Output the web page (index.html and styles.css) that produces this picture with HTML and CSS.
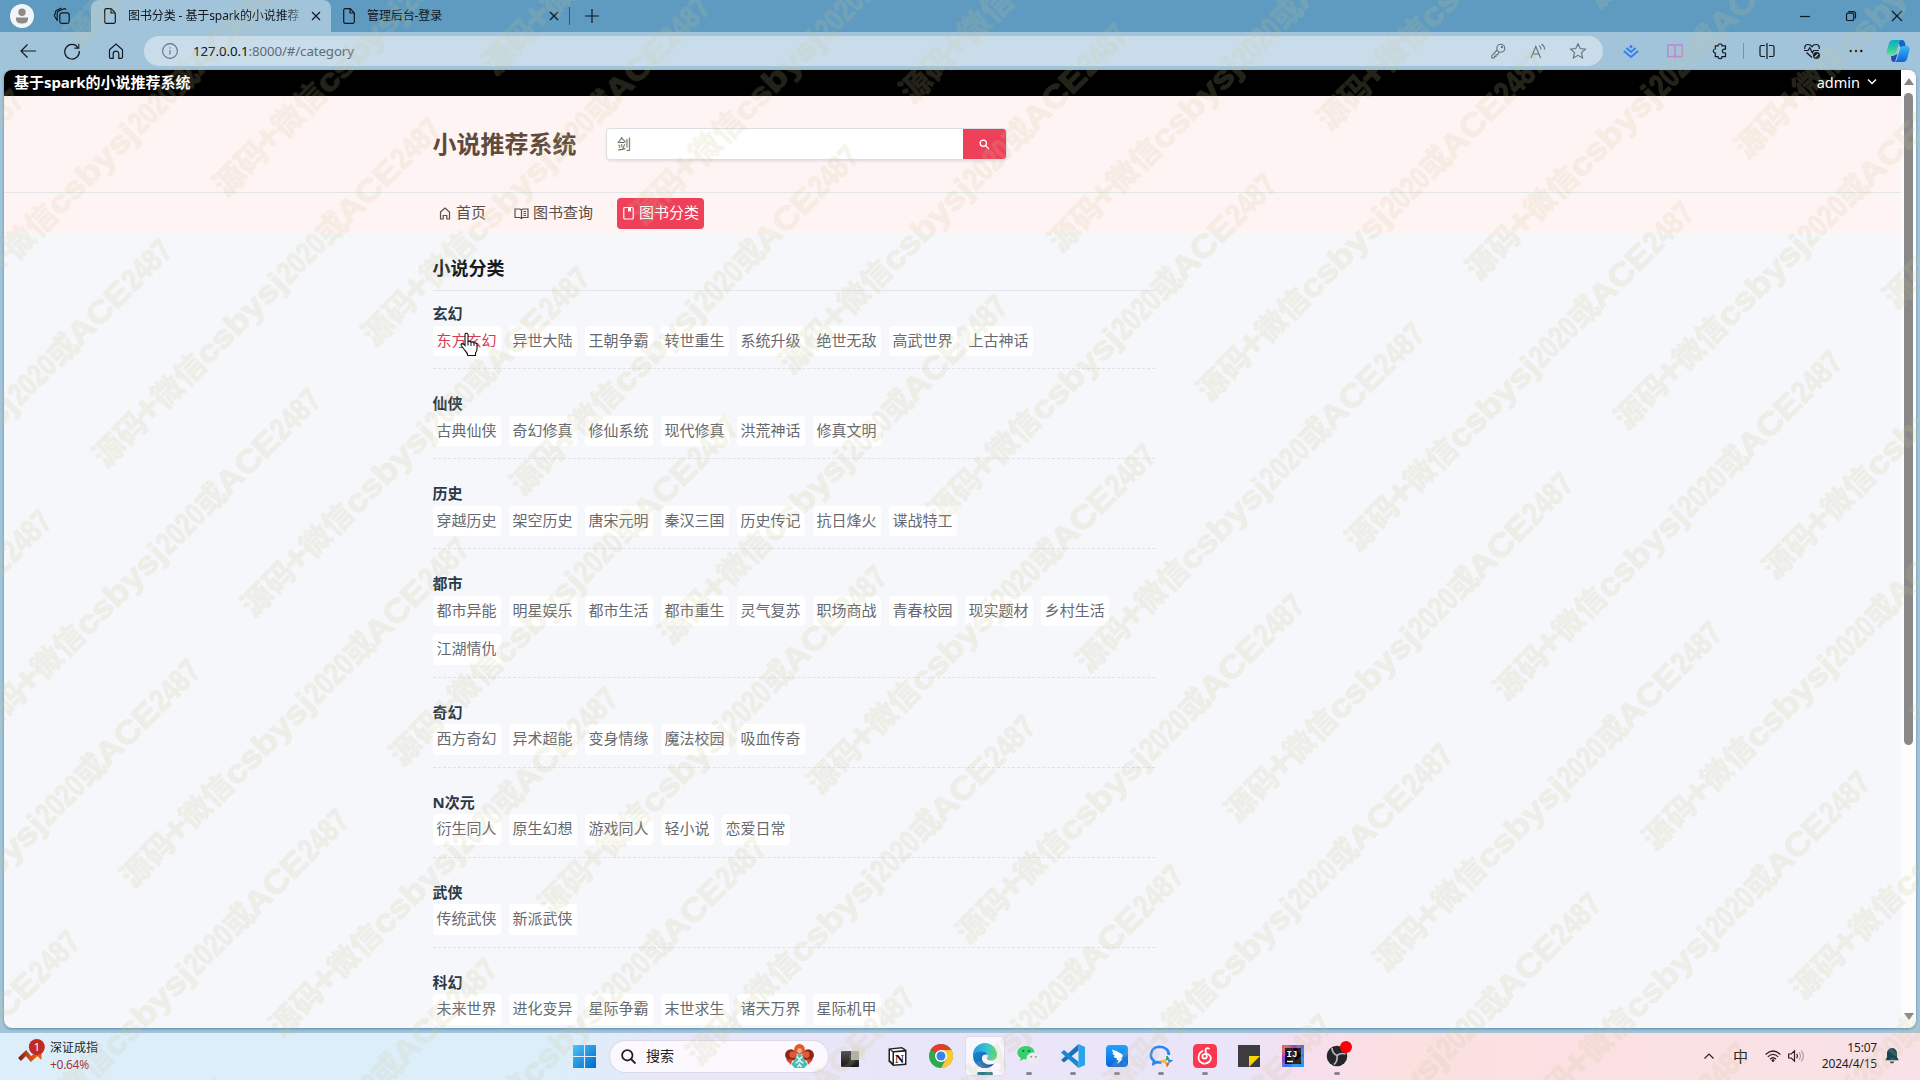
FILE: index.html
```html
<!DOCTYPE html>
<html lang="zh-CN">
<head>
<meta charset="utf-8">
<title>图书分类 - 基于spark的小说推荐系统</title>
<link rel="stylesheet" href="styles.css">
</head>
<body>
<div class="screen">
  <div class="tabbar">
    <svg class="avatar" viewBox="0 0 24 24"><circle cx="12" cy="12" r="12" fill="#f4f5f6"/><circle cx="12" cy="8.2" r="3.7" fill="#8b8b8b"/><path d="M6 13.5h12v1.5q0 4.5-6 4.5t-6-4.5z" fill="#8b8b8b"/></svg>
    <svg class="spaces ico" viewBox="0 0 18 18"><rect x="6.800" y="5.800" width="9.400" height="10.600" rx="2.200"/><path d="M4.200 14V6.200q0-1.600 1.500-2.300L11 1.800q1.500-.4 2 1M4.200 13.500 1.600 9.300q-.7-1.500.6-2.300l.2-1.500Q2.400 4 3.700 3.300L8.500 1"/></svg>
    <div class="tab active">
      <svg class="file ico" viewBox="0 0 12 16"><path d="M2 .7h5.200L11.300 5v8.800a1.500 1.500 0 0 1-1.500 1.500H2A1.500 1.500 0 0 1 .7 13.800V2.200A1.500 1.500 0 0 1 2 .7zM7 .9V5h4"/></svg>
      <span class="tab-title fade">图书分类 - 基于spark的小说推荐</span>
      <svg class="close ico" viewBox="0 0 10 10"><path d="M1 1l8 8M9 1L1 9"/></svg>
    </div>
    <div class="tab">
      <svg class="file ico" viewBox="0 0 12 16"><path d="M2 .7h5.200L11.300 5v8.800a1.500 1.500 0 0 1-1.500 1.500H2A1.500 1.500 0 0 1 .7 13.800V2.200A1.500 1.500 0 0 1 2 .7zM7 .9V5h4"/></svg>
      <span class="tab-title">管理后台-登录</span>
      <svg class="close ico" viewBox="0 0 10 10"><path d="M1 1l8 8M9 1L1 9"/></svg>
    </div>
    <i class="tab-sep"></i>
    <svg class="plus ico" viewBox="0 0 14 14"><path d="M7 0v14M0 7h14"/></svg>
    <div class="win-controls">
      <svg class="ico" viewBox="0 0 10 10"><path d="M0 5.500h10"/></svg>
      <svg class="ico" viewBox="0 0 10 10"><rect x=".5" y="2.200" width="7.200" height="7.300" rx="1.300"/><path d="M2.300.6h5.200a2 2 0 0 1 2 2v5"/></svg>
      <svg class="ico" viewBox="0 0 10 10"><path d="M0 0l10 10M10 0L0 10"/></svg>
    </div>
  </div>

  <div class="toolbar">
    <div class="nav-buttons">
      <svg class="ico" viewBox="0 0 16 16"><path d="M16 8H1M7.500 1.500 1 8l6.500 6.500"/></svg>
      <svg class="ico" viewBox="0 0 16 16"><path d="M14 4.500A7.300 7.300 0 1 0 15.300 8M14.800.8v4.400h-4.400"/></svg>
      <svg class="ico" viewBox="0 0 16 16"><path d="M1.500 6.700 8 1l6.500 5.700v7.300a1.300 1.300 0 0 1-1.300 1.300h-2.400V11a2.800 2.800 0 0 0-5.600 0v4.300H2.800a1.300 1.300 0 0 1-1.300-1.300z"/></svg>
    </div>
    <div class="address">
      <svg class="info" viewBox="0 0 16 16"><circle cx="8" cy="8" r="7.400"/><path d="M8 7v4.500M8 4.200v1.300"/></svg>
      <span class="url"><b>127.0.0.1</b>:8000/#/category</span>
      <div class="address-tools">
        <svg viewBox="0 0 16 16"><circle cx="10.800" cy="5.200" r="4"/><circle cx="12" cy="4" r=".6"/><path d="M7.200 7 1.800 12.600V15h2.600v-1.600H6v-1.700h1.800L9 8.900"/></svg>
        <svg viewBox="0 0 16 16"><path d="M1 15 5.800 3.500 10.600 15M2.600 11h6.400M9.300 2.800q1.700 1.200 1.700 3.600M11.600 1q3 2 3 5.500"/></svg>
        <svg viewBox="0 0 16 16"><path d="M8 .8l2.200 4.800 5.200.6-3.900 3.500 1.100 5.200L8 12.300l-4.600 2.600 1.100-5.200L.6 6.200l5.200-.6z"/></svg>
      </div>
    </div>
    <div class="extensions">
      <svg viewBox="0 0 16 16"><path d="M8 1.800l1.900 1.900L8 5.600 6.100 3.700z" fill="#2f7ff0"/><path d="M3.300 5 8 9l4.700-4M.8 8 8 14l7.200-6" fill="none" stroke="#2f7ff0" stroke-width="1.900"/></svg>
      <svg viewBox="0 0 16 16"><path d="M8 3v11M.8 2h5.600Q8 2 8 3.500 8 2 9.600 2h5.600v11.500H9.600L8 14.500l-1.600-1H.8z" fill="none" stroke="#bd86ce" stroke-width="1.500"/></svg>
      <svg class="ico" viewBox="0 0 16 16"><path d="M3.300 2.800h2.800a2 2 0 0 1 4 0h3.400v3.400h-1.200a1.900 1.900 0 0 0 0 3.800h1.200v3.700H10a2 2 0 0 1-4 0H3.300V10a2 2 0 0 1 0-4z"/></svg>
      <i class="tool-sep"></i>
      <svg class="ico" viewBox="0 0 16 16"><path d="M8 0v16M6 2.500H2.500A1.500 1.500 0 0 0 1 4v8a1.500 1.500 0 0 0 1.500 1.500H6M10 2.500h3.500A1.500 1.500 0 0 1 15 4v8a1.500 1.500 0 0 1-1.500 1.500H10"/></svg>
      <svg class="ico" viewBox="0 0 16 16"><path d="M.8 6Q.3 1.500 4 1.500q2.500 0 4 2.200 1.500-2.200 4-2.200 3.700 0 3.300 4.500M0 7.500h4l1.800-2.800 2.500 5 1.500-2.200h5M2.500 9.500 8 14.500"/><circle cx="12.500" cy="12.500" r="3.500" fill="#101820" stroke="none"/><path d="M10.800 14l3.300-3" stroke="#a2c4da"/></svg>
      <svg viewBox="0 0 16 16"><path d="M2.700 8h.01M8 8h.01M13.300 8h.01" stroke="#111" stroke-width="2.400" stroke-linecap="round"/></svg>
    </div>
    <svg class="copilot" viewBox="0 0 24 24"><defs><linearGradient id="cpA" x2="0" y2="1"><stop stop-color="#11a9c4"/><stop offset=".6" stop-color="#2fce9c"/><stop offset="1" stop-color="#7bdca0"/></linearGradient><linearGradient id="cpB" x2="0" y2="1"><stop stop-color="#3cb5f5"/><stop offset="1" stop-color="#0b66d8"/></linearGradient></defs><path d="M12 1h4q2 0 2.700 2l1.300 5h-6z" fill="#1763c9"/><path d="M5 16h4q2 0 2.700-2l-2 7q-.7 2-2 2-2 0-2.500-3z" fill="#2447c0"/><path d="M7 1h9q-2 0-2.700 2L9.500 15q-.7 2-2.500 2H3q-3 0-2.500-4L3 4q1-3 4-3z" fill="url(#cpA)"/><path d="M17 23H8q2 0 2.700-2L14.500 9q.7-2 2.500-2h4q3 0 2.500 4L21 20q-1 3-4 3z" fill="url(#cpB)"/></svg>
  </div>

  <div class="viewport">
    <div class="page">
      <div class="topline"><strong>基于<span>spark</span>的小说推荐系统</strong><span class="user">admin<svg viewBox="0 0 10 8"><path d="M1 1.500l4 4 4-4"/></svg></span></div>
      <header class="header">
        <h1>小说推荐系统</h1>
        <div class="search"><span class="field">剑</span><span class="go"><svg viewBox="0 0 12 12"><circle cx="4.700" cy="4.700" r="3.400"/><path d="M7.200 7.200l3.800 3.800"/></svg></span></div>
      </header>
      <nav class="nav">
        <a><svg viewBox="0 0 12 14"><path d="M1.500 6 6 2l4.500 4v7H7.800V9.500H4.200V13H1.500z"/></svg>首页</a>
        <a class="wide"><svg viewBox="0 0 15 14"><path d="M7.500 4v8.500M1 3h5l1.500 1L9 3h5v8.500H9l-1.500 1-1.500-1H1zM9.500 5.500H12M9.500 7.500H12M9.500 9.500H12"/></svg>图书查询</a>
        <a class="current"><svg viewBox="0 0 11 14"><rect x=".8" y="1.500" width="9.400" height="11.500" rx="1"/><path d="M5 1.500v4.500l1.500-1 1.500 1V1.500z" fill="#fff" stroke="none"/></svg>图书分类</a>
      </nav>
      <main class="content">
        <h2>小说分类</h2>
        <section><h3>玄幻</h3><div class="tags"><a class="hover">东方玄幻</a><a>异世大陆</a><a>王朝争霸</a><a>转世重生</a><a>系统升级</a><a>绝世无敌</a><a>高武世界</a><a>上古神话</a></div></section>
        <section><h3>仙侠</h3><div class="tags"><a>古典仙侠</a><a>奇幻修真</a><a>修仙系统</a><a>现代修真</a><a>洪荒神话</a><a>修真文明</a></div></section>
        <section><h3>历史</h3><div class="tags"><a>穿越历史</a><a>架空历史</a><a>唐宋元明</a><a>秦汉三国</a><a>历史传记</a><a>抗日烽火</a><a>谍战特工</a></div></section>
        <section><h3>都市</h3><div class="tags"><a>都市异能</a><a>明星娱乐</a><a>都市生活</a><a>都市重生</a><a>灵气复苏</a><a>职场商战</a><a>青春校园</a><a>现实题材</a><a>乡村生活</a><a>江湖情仇</a></div></section>
        <section><h3>奇幻</h3><div class="tags"><a>西方奇幻</a><a>异术超能</a><a>变身情缘</a><a>魔法校园</a><a>吸血传奇</a></div></section>
        <section><h3>N次元</h3><div class="tags"><a>衍生同人</a><a>原生幻想</a><a>游戏同人</a><a>轻小说</a><a>恋爱日常</a></div></section>
        <section><h3>武侠</h3><div class="tags"><a>传统武侠</a><a>新派武侠</a></div></section>
        <section><h3>科幻</h3><div class="tags"><a>未来世界</a><a>进化变异</a><a>星际争霸</a><a>末世求生</a><a>诸天万界</a><a>星际机甲</a></div></section>
      </main>
    </div>
    <div class="scrollbar"><i class="arrow up"></i><i class="thumb"></i><i class="arrow down"></i></div>
  </div>

  <div class="taskbar">
    <div class="stock">
      <svg viewBox="0 0 27 24"><defs><linearGradient id="st"><stop stop-color="#7a1f1f"/><stop offset=".45" stop-color="#c84a1a"/><stop offset="1" stop-color="#f0640a"/></linearGradient></defs><path d="M1.500 20.500 8 14l5 6 9-8" fill="none" stroke="url(#st)" stroke-width="4.200"/><path d="M14 12h9.500v9z" fill="#e8590c"/><circle cx="18.800" cy="8" r="8" fill="#c02a22"/><text x="18.800" y="12" font-size="11" text-anchor="middle" fill="#fff">1</text></svg>
      <div><p>深证成指</p><p class="rise">+0.64%</p></div>
    </div>
    <svg class="start" viewBox="0 0 24 24"><defs><linearGradient id="wl" x2="1" y2="1"><stop stop-color="#4cc4f7"/><stop offset="1" stop-color="#0067c8"/></linearGradient></defs><path d="M0 0h11.400v11.400H0zM12.600 0H24v11.400H12.600zM0 12.600h11.400V24H0zM12.600 12.600H24V24H12.600z" fill="url(#wl)"/></svg>
    <div class="task-search">
      <svg class="glass" viewBox="0 0 15 15"><circle cx="6.300" cy="6.300" r="5.200"/><path d="M10 10l4.500 4.500"/></svg><span>搜索</span>
      <svg class="flower" viewBox="0 0 30 26"><circle cx="6" cy="11.500" r="6" fill="#8c2716"/><circle cx="24" cy="11.500" r="6" fill="#8c2716"/><circle cx="8" cy="11" r="3.500" fill="#e4583a"/><circle cx="22" cy="11" r="3.500" fill="#e4583a"/><path d="M1 16.500l7-1-2 6zM29 16.500l-7-1 2 6z" fill="#d8452c"/><circle cx="15" cy="5.500" r="5.500" fill="#e3562e"/><circle cx="15" cy="7" r="2.500" fill="#f7b27a"/><path d="M15 9l4 5 1.500 3 3 4-3.500 4H10l-3.500-4 3-4L11 14z" fill="#4bbcb0"/><path d="M12 13l3 3 3-3M11 20l4-3 4 3M13 24l2-3 2 3" stroke="#e9fbf6" stroke-width="1.500" fill="none"/></svg>
    </div>
    <div class="apps">
      <span><svg viewBox="0 0 24 24"><defs><linearGradient id="tv" x2="0" y2="1"><stop stop-color="#555"/><stop offset="1" stop-color="#151515"/></linearGradient></defs><rect y="7" width="18" height="16" rx="1" fill="url(#tv)"/><path d="M10 1h14v15H10z" fill="#e2e2e0" opacity=".92"/><path d="M10 7h8v9h-8z" fill="#b0b0a8"/></svg></span>
      <span><svg viewBox="0 0 24 24"><path d="M3.500 4.500 17 3l4.500 3V21L8 22l-4.500-4.500z" fill="#222"/><path d="M5 6l2.500 2.300v10.500L5 16.300zM9 8.600l11-.9v11.800l-11 .9z" fill="#fff"/><path d="M6 5.500l10.500-1.100 2.500 1.700-11 .9z" fill="#fff"/><text x="14.500" y="18.500" font-size="12.500" font-weight="700" text-anchor="middle" font-family="Liberation Serif, serif" fill="#111">N</text></svg></span>
      <span><svg viewBox="0 0 24 24"><circle cx="12" cy="12" r="12" fill="#2da94f"/><path d="M12 12 1.600 6A12 12 0 0 1 22.400 6z" fill="#e33b2e"/><path d="M1.600 6 12 24Q10 18 6.500 14z" fill="#2da94f"/><path d="M12 6h10.400A12 12 0 0 1 12 24l5.200-9z" fill="#fcc934"/><circle cx="12" cy="12" r="6" fill="#fff"/><circle cx="12" cy="12" r="4.500" fill="#3b82ec"/></svg></span>
      <span class="focused"><svg viewBox="0 0 24 24"><defs><linearGradient id="eg"><stop stop-color="#2497dc"/><stop offset=".6" stop-color="#37c6cf"/><stop offset="1" stop-color="#68d660"/></linearGradient><linearGradient id="eb" x2="1" y2="1"><stop stop-color="#1b8ad8"/><stop offset="1" stop-color="#0c4a96"/></linearGradient></defs><path d="M0 11A12 12 0 0 1 24 11c0 4-3 5.500-6 5.500-2.500 0-4-1-4-2.300 0-.8 1-1.200 1-2.700 0-2-2.500-4-6-4-4 0-7 2-9 5z" fill="url(#eg)"/><path d="M0 12C1 8.500 5 7.300 8 7.300c3.500 0 6.700 1.500 7 4-.5-1-5-2-6 2-1 4.500 4 8 8.500 7.200 2 0 3.500-1 4.300-1.500A12 12 0 0 1 0 12z" fill="url(#eb)"/><path d="M7 10q-3 5 0 9t7 4.800Q10 24.500 6 22.300 1 19 2.500 14.500 4 11 7 10z" fill="#1a78c8"/></svg><i></i></span>
      <span><svg viewBox="0 0 24 24"><path d="M9 2c5 0 8.500 3 8.500 6.800S14 15.500 9 15.500l-2.500-.4L3 17l.8-3A6.500 6.500 0 0 1 .3 8.800C.3 5 4 2 9 2z" fill="#35cf6c"/><circle cx="6.300" cy="7" r="1.100" fill="#176b38"/><circle cx="12" cy="7" r="1.100" fill="#176b38"/><path d="M16.500 8.500c4 0 7 2.500 7 5.500 0 2-1 3.300-2.700 4.200l.5 2.300-2.700-1.300c-5 .8-9-1.700-9-5.200 0-3 3-5.500 6.900-5.500z" fill="#ececef"/><circle cx="14.300" cy="12.800" r=".9" fill="#888"/><circle cx="18.800" cy="12.800" r=".9" fill="#888"/></svg><i></i></span>
      <span><svg viewBox="0 0 24 24"><path d="M17.500 0v6.500L3 18.500 0 16z" fill="#1673b8"/><path d="M0 8.500 3 6l14.500 11.800V24z" fill="#1c86cf"/><path d="M17.500 0 24 3v18l-6.500 3z" fill="#29a3ec"/></svg><i></i></span>
      <span><svg viewBox="0 0 24 24"><defs><linearGradient id="dt" x2="0" y2="1"><stop stop-color="#1fa4fb"/><stop offset="1" stop-color="#0864dc"/></linearGradient></defs><rect x="1" y="1" width="22" height="22" rx="4" fill="url(#dt)"/><path d="M7 5.500q5 1.500 9.500 4.200 2 1.300 1 3.300L16 15h1.500l-5 5 1-4h-2l.7-1.500Q9 14 8.500 12l2 .3Q7.500 10.500 7.300 8.700l2 .8Q7 7.500 7 5.500z" fill="#fff"/></svg><i></i></span>
      <span><svg viewBox="0 0 24 24"><path d="M12.500 18.300q-2.500.5-4.500-.3l-3.500 1.700.4-3C-.3 13 1.500 3 10.500 2.800c6 0 9.700 3.700 9.300 8.200" fill="none" stroke="#2e84e8" stroke-width="2.600"/><path d="M18 12l2 3-2.500 1z" fill="#16a765" stroke="#16a765"/><path d="M23.500 16.500l-3.500 2-.5-2.500z" fill="#2e84e8" stroke="#2e84e8"/><path d="M18 22.500l-.5-3.500 2.500.5z" fill="#f0562c" stroke="#f0562c"/><path d="M12.500 17l3.500-.8.5 2.500z" fill="#f9b51c" stroke="#f9b51c" stroke-width="1.500"/></svg><i></i></span>
      <span><svg viewBox="0 0 24 24"><rect width="24" height="24" rx="4.500" fill="#fb3850"/><path d="M16 4.500q-3.500-1-3.500 2l1.300 6a2.200 2.200 0 1 1-2.600-2.300Q14.500 9 16.800 11.500q2.200 3-.3 6-2.500 2.500-6 2-4.500-1-5-5.500Q5.500 9 9.500 7" fill="none" stroke="#fff" stroke-width="1.800" stroke-linecap="round"/></svg><i></i></span>
      <span><svg viewBox="0 0 24 24"><path d="M1 1h22v22H1z" fill="#3c3c3e"/><path d="M12 12h11L12 23z" fill="#f9d500"/></svg></span>
      <span><svg viewBox="0 0 24 24"><defs><linearGradient id="ij" x2="1" y2="1"><stop stop-color="#f0742e"/><stop offset=".3" stop-color="#b03ab8"/><stop offset=".6" stop-color="#2f7af0"/><stop offset="1" stop-color="#2a9bf5"/></linearGradient></defs><rect x="1" y="1" width="22" height="22" fill="url(#ij)"/><rect x="4" y="4" width="16" height="16" fill="#0a0510"/><path d="M6 17.500h6" stroke="#fff" stroke-width="1.500"/><text x="5.500" y="13" font-size="9" font-weight="700" font-family="Liberation Mono, monospace" fill="#fff">IJ</text></svg></span>
      <span><svg class="obs" viewBox="0 0 24 24"><circle cx="12" cy="12" r="10.300" fill="#26262a"/><path d="M7 4q0 5 5 7.500M20.500 10q-5-1.500-8.500 1.500M9 20.500q4-3.500 3-9" fill="none" stroke="#b5b5b8" stroke-width="1.700"/><circle cx="21" cy="3" r="6" fill="#fb0007"/></svg><i></i></span>
    </div>
    <div class="tray">
      <svg class="chev" viewBox="0 0 10 6"><path d="M.5 5.500 5 1l4.500 4.500"/></svg>
      <span class="ime">中</span>
      <svg class="wifi" viewBox="0 0 16 12"><path d="M.6 4.500q7.400-7 14.800 0M2.800 6.900q5.200-5 10.400 0M5 9.200q3-2.900 6 0"/><circle cx="8" cy="10.600" r="1.400" fill="#2a2024" stroke="none"/></svg>
      <svg class="vol" viewBox="0 0 16 12"><path d="M.6 4h2.600L6.500.9v10.200L3.200 8H.6zM8.700 3.800q1.500 2.200 0 4.400"/><path d="M11 2.300q3 3.700 0 7.400M13.300.7q4.200 5.300 0 10.600" opacity=".35"/></svg>
      <div class="clock">15:07<br>2024/4/15</div>
      <svg class="bell" viewBox="0 0 14 16"><path d="M7 0a5 5 0 0 1 5 5v4l1.800 3.200H.2L2 9V5a5 5 0 0 1 5-5zM4.800 13.500h4.400Q9 15.600 7 15.600t-2.200-2.100z" fill="#174652"/></svg>
    </div>
  </div>

  <svg class="pointer" viewBox="0 0 20 25"><path d="M5.500 1.500q1.800-.8 2.500 1v7q2-.9 3 .8 2-.9 3 .8 1.900-.7 3 1V17q0 2.500-1.500 4v2.500H7.800Q7.500 21 5 18.500L1.200 13.500q-.6-1.600 1-1.900 1.300 0 2.800 1.900V3q0-1 .5-1.500z" fill="#fff" stroke="#111" stroke-width="1.100"/><path d="M8 9.500v4M11 10.500v3.500M14 11.500V14" stroke="#111"/></svg>
  <svg class="stamp" viewBox="0 0 1920 1080"><g id="stamps"></g></svg>
</div>
<script src="script.js"></script>
</body>
</html>
```
FILE: styles.css
```css
* { box-sizing: border-box; }
body { margin: 0; overflow: hidden; font-family: "Noto Sans", "Noto Sans CJK SC", sans-serif; }
h1, h2, h3, p { margin: 0; }
svg { display: block; flex: none; overflow: visible; }
.screen { position: relative; width: 1920px; height: 1080px; overflow: hidden; background: #a2c4da; display: flex; flex-direction: column; }
.ico { fill: none; stroke: #101820; stroke-width: 1.2; }

/* browser chrome */
.tabbar { height: 32px; flex: none; background: #5f9bc0; display: flex; align-items: center; padding-left: 10px; }
.avatar { width: 24px; height: 24px; }
.spaces { width: 18px; height: 18px; margin: 0 20px 0 19px; }
.tab { width: 238px; height: 32px; display: flex; align-items: center; padding: 0 10px 0 12px; font-size: 12px; color: #10161c; }
.tab.active { width: 240px; background: #a2c4da; border-radius: 8px 8px 0 0; padding-left: 13px; }
.file { width: 12px; height: 16px; margin-right: 12px; }
.tab-title { flex: 1; white-space: nowrap; line-height: 20px; margin-right: 9px; letter-spacing: -.1px; }
.fade { letter-spacing: -.1px; -webkit-mask-image: linear-gradient(90deg, #000 90%, #0003); mask-image: linear-gradient(90deg, #000 90%, #0003); }
.close { width: 10px; height: 10px; }
.tab-sep { width: 1px; height: 18px; background: #34566c; }
.plus { width: 14px; height: 14px; margin-left: 15px; }
.win-controls { margin-left: auto; display: flex; gap: 36px; padding-right: 18px; }
.win-controls svg { width: 10px; height: 10px; }
.toolbar { height: 38px; flex: none; display: flex; align-items: center; padding: 0 10px 0 20px; }
.nav-buttons { display: flex; gap: 28px; width: 124px; }
.nav-buttons svg { width: 16px; height: 16px; }
.address { width: 1459px; height: 30px; border-radius: 15px; background: #c9dce9; display: flex; align-items: center; padding: 0 17px 0 18px; }
.info, .address-tools svg { width: 16px; height: 16px; fill: none; stroke: #63717c; stroke-width: 1.1; }
.url { margin-left: 15px; font-size: 13.300px; color: #5e6b75; letter-spacing: -.1px; }
.url b { font-weight: 400; color: #111; }
.address-tools { margin-left: auto; display: flex; gap: 24px; }
.extensions { display: flex; align-items: center; gap: 28.300px; margin-left: 20px; }
.extensions svg { width: 16px; height: 16px; }
.tool-sep { width: 1px; height: 16px; background: #7396ab; margin: 0 -12.800px 0 -13.200px; }
.copilot { width: 24px; height: 24px; margin-left: auto; }

/* web page */
.viewport { height: 958px; margin: 0 4px; flex: none; display: flex; border-radius: 8px; overflow: hidden; background: #f5f7fa; box-shadow: 0 1px 3px #5b87a5; }
.page { width: 1897px; overflow: hidden; }
.topline { height: 26px; background: #000; color: #fff; display: flex; align-items: center; justify-content: space-between; padding: 0 24px 2px 10px; font-size: 15px; }
.topline strong { padding-bottom: 1px; }
.topline strong span { letter-spacing: -.1px; }
.user { display: flex; align-items: center; gap: 7px; font-size: 14.500px; }
.user svg { width: 10px; height: 8px; fill: none; stroke: #fff; stroke-width: 1.500; }
.header { height: 97px; background: #fff4f4; border-bottom: 1px solid #e2e5e3; display: flex; align-items: center; padding-left: 428.500px; }
.header h1 { width: 174.500px; font-size: 24px; line-height: 30px; color: #5f4b3c; }
.search { display: flex; width: 399px; height: 30.500px; border-radius: 3px; background: #fff; box-shadow: 0 0 0 1px #dcdfe2, 0 2px 3px #d9d9dd; overflow: hidden; }
.field { flex: 1; padding-left: 10px; font-size: 14px; line-height: 30px; color: #5a5d62; }
.go { width: 43px; background: #ee4059; display: flex; align-items: center; justify-content: center; }
.go svg { width: 11px; height: 11px; fill: none; stroke: #fff; stroke-width: 1.400; }
.nav { height: 41px; background: #fff4f4; display: flex; align-items: center; padding: 0 0 1px 429px; font-size: 15px; color: #5b4d43; }
.nav a { height: 31px; display: flex; align-items: center; gap: 5px; padding: 0 6px 3px; }
.nav a svg { height: 14px; width: 12px; fill: none; stroke: currentColor; stroke-width: 1.200; position: relative; top: 1px; }
.nav .wide { margin-left: 16px; gap: 4px; }
.nav .wide svg { width: 15px; }
.nav .current { margin-left: 18px; padding: 0 5px 3px 6px; color: #fff; background: #ee4059; border-radius: 4px; }
.nav .current svg { width: 11px; }
.content { width: 722px; margin-left: 428.500px; }
h2 { height: 57px; font-size: 18px; line-height: 68px; color: #171a1e; border-bottom: 1px solid #e2e5e9; margin-bottom: 13px; }
section { padding-bottom: 12px; border-bottom: 1px dashed #dfe2e6; margin-bottom: 25px; }
h3 { height: 21.500px; font-size: 15px; line-height: 18px; color: #2c3947; }
.tags { display: flex; flex-wrap: wrap; gap: 8px; }
.tags a { height: 30.500px; padding: 0 4px; line-height: 28.500px; font-size: 15px; color: #66696f; background: #fff; border-radius: 4px; }
.tags .hover { color: #d93a58; }
.scrollbar { width: 15px; background: #fcfcfc; display: flex; flex-direction: column; align-items: center; padding: 8px 0; }
.arrow { border: 5px solid transparent; }
.up { border-top: 0; border-bottom: 7px solid #858585; }
.down { border-bottom: 0; border-top: 7px solid #858585; margin-top: auto; }
.thumb { width: 9px; height: 652px; margin-top: 8px; border-radius: 5px; background: #898989; }

/* taskbar */
.taskbar { margin-top: 5px; height: 47px; flex: none; position: relative; display: flex; align-items: center; padding: 0 21px 0 18px; color: #1f1f22; font-size: 12px; background: linear-gradient(90deg, #dceefa 0, #dceefa 560px, #e9e6f8 690px, #eae4f8 1240px, #f6deee 1300px, #fbe0e0 1400px, #fae1e4 1700px, #f8e1e7 100%); }
.stock { width: 555px; display: flex; gap: 5px; align-items: center; line-height: 17px; padding-bottom: 2px; }
.stock > svg { width: 27px; height: 24px; margin-bottom: 10px; }
.stock .rise { color: #a5343b; letter-spacing: -.3px; }
.start { width: 23px; height: 23px; }
.task-search { width: 218px; height: 31px; margin-left: 14px; border-radius: 16px; background: #fbf9fe; box-shadow: 0 0 0 1px #dcd8e8; display: flex; align-items: center; padding: 0 14px 1px 11px; font-size: 14px; }
.glass { width: 15px; height: 15px; fill: none; stroke: #202124; stroke-width: 1.800; margin-right: 10px; }
.task-search span { line-height: 20px; padding-bottom: 1px; }
.flower { width: 29px; height: 25px; margin-left: auto; }
.apps { display: flex; margin-left: 3px; }
.apps span { width: 44px; height: 47px; display: flex; align-items: center; justify-content: center; position: relative; padding-bottom: 1px; }
.apps svg { width: 24px; height: 24px; }
.apps i { position: absolute; left: 19px; top: 39px; width: 6px; height: 3px; border-radius: 2px; background: #8a8691; }
.apps .focused::before { content: ""; position: absolute; left: 3px; top: 4px; width: 38px; height: 38px; border-radius: 4px; background: #f8f7fd; box-shadow: 0 0 1px 1px #dedbe9; }
.apps .focused svg { position: relative; }
.apps .focused i { left: 14px; width: 16px; background: #2b7e88; }
.tray { margin-left: auto; display: flex; align-items: center; padding-bottom: 1px; }
.tray svg { fill: none; stroke: #2a2024; stroke-width: 1.200; }
.chev { width: 10px; height: 6px; margin-right: 19px; }
.ime { font-size: 15px; line-height: 20px; width: 15px; margin-right: 17px; padding-bottom: 1px; }
.wifi { width: 16px; height: 12px; margin-right: 7px; }
.vol { width: 16px; height: 12px; }
.clock { width: 73px; text-align: right; line-height: 16px; letter-spacing: -.2px; white-space: nowrap; margin-right: 8px; }
.tray .bell { width: 14px; height: 16px; stroke: none; }

/* layers above the desktop */
.pointer { position: absolute; left: 460px; top: 332px; width: 20px; height: 25px; fill: none; }
.stamp { position: absolute; left: 0; top: 0; width: 1920px; height: 1080px; pointer-events: none; font: 900 31px "Liberation Sans", "Noto Sans CJK SC", sans-serif; fill: #cdc796; stroke: #cdc796; stroke-linejoin: round; opacity: .18; }
```
FILE: script.js
```js
// Repeats the diagonal stamp on a skewed lattice: [text, start, width, font size, outline] along the line.
const parts = [["源码", 0, 62, 31, 0.2], ["+", 60, 24, 38, 1.2], ["微信", 83, 62, 31, 0.2], ["csbysj", 145, 114, 32, 1.2], ["2020", 260, 55, 32, 1.2], ["或", 315, 30, 31, 0.2], ["ACE", 344, 76, 32, 1.2], ["2487", 421, 57, 32, 1.2]];
const line = parts.map(([t, x, w, s, o]) => `<text x="${x}" y="0" font-size="${s}" stroke-width="${o}" textLength="${w}" lengthAdjust="spacingAndGlyphs">${t}</text>`).join("");
let out = "";
for (let i = -8; i <= 10; i++) {
  for (let j = -6; j <= 7; j++) {
    const x = 523 + 148.5 * i + 417.5 * j;
    const y = 497 + 149.5 * i + 28 * j;
    if (x < -360 || x > 1940 || y < -20 || y > 1440) continue;
    out += `<g transform="translate(${x} ${y}) rotate(-45)">${line}</g>`;
  }
}
document.getElementById("stamps").innerHTML = out;
```
